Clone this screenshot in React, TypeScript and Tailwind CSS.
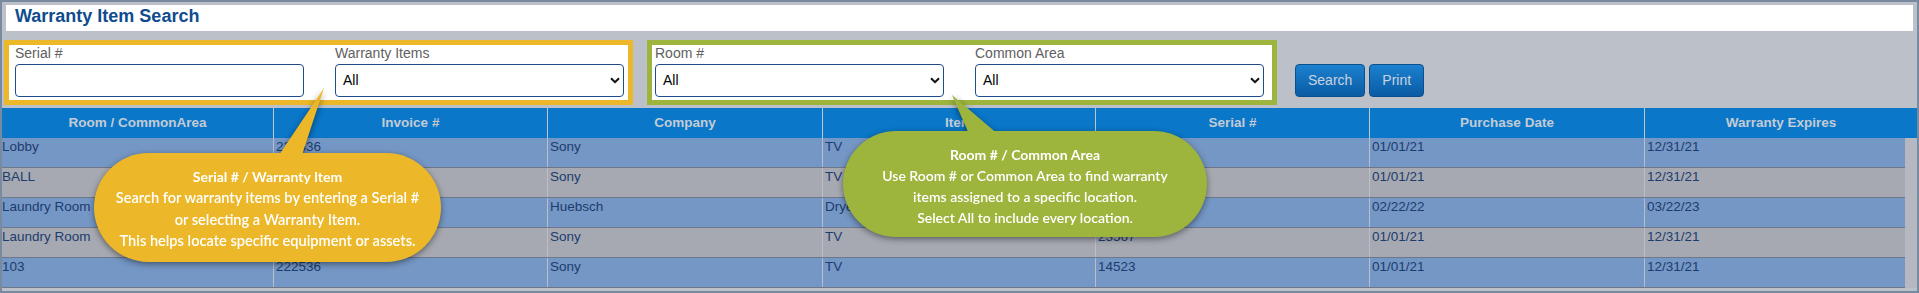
import type { ReactNode } from "react";

type WarrantyRow = {
  room: string;
  invoice: string;
  company: string;
  item: string;
  serial: string;
  purchased: string;
  expires: string;
};

const columns = [
  "Room / CommonArea",
  "Invoice #",
  "Company",
  "Item",
  "Serial #",
  "Purchase Date",
  "Warranty Expires",
];

const rows: WarrantyRow[] = [
  { room: "Lobby", invoice: "222536", company: "Sony", item: "TV", serial: "14523", purchased: "01/01/21", expires: "12/31/21" },
  { room: "BALL", invoice: "222536", company: "Sony", item: "TV", serial: "14523", purchased: "01/01/21", expires: "12/31/21" },
  { room: "Laundry Room", invoice: "34458", company: "Huebsch", item: "Dryer", serial: "HB22457", purchased: "02/22/22", expires: "03/22/23" },
  { room: "Laundry Room", invoice: "222536", company: "Sony", item: "TV", serial: "23567", purchased: "01/01/21", expires: "12/31/21" },
  { room: "103", invoice: "222536", company: "Sony", item: "TV", serial: "14523", purchased: "01/01/21", expires: "12/31/21" },
];

const gridCols = "grid grid-cols-[271px_274px_275px_273px_274px_275px_1fr]";

function Field({ label, children }: { label: string; children: ReactNode }) {
  return (
    <div className="flex w-[289px] flex-col">
      <span className="h-[16px] text-[14px] leading-[16px] text-[#606060]">{label}</span>
      <div className="mt-[3px] h-[33px]">{children}</div>
    </div>
  );
}

function Select() {
  return (
    <div className="relative h-[33px] w-[289px]">
      <select
        defaultValue="All"
        className="h-full w-full appearance-none rounded-[4px] border border-[#1f4d8c] bg-white pl-[7px] text-[14px] text-black outline-none"
      >
        <option>All</option>
      </select>
      <svg
        className="pointer-events-none absolute right-[4px] top-[13px]"
        width="10"
        height="7"
        viewBox="0 0 10 7"
      >
        <path d="M1 1.2 L5 5.2 L9 1.2" fill="none" stroke="#111" strokeWidth="2" />
      </svg>
    </div>
  );
}

function FormButton({ label }: { label: string }) {
  return (
    <button
      type="button"
      className="h-[33px] rounded-[4px] border border-[#0b4f8c] bg-gradient-to-b from-[#1c81cf] to-[#0a5ba4] px-[12px] text-[14px] text-[#c9d3e0]"
    >
      {label}
    </button>
  );
}

export default function App() {
  return (
    <div className="relative h-[293px] w-[1919px] overflow-hidden border-2 border-[#778aa0] bg-[#bcc0c8] font-['Liberation_Sans',Arial,sans-serif]">
      <div className="mx-[4px] mt-[3px] h-[26px] bg-white pl-[9px]">
        <h1 className="text-[18px] font-bold leading-[23px] text-[#0f4c8e]">
          Warranty Item Search
        </h1>
      </div>

      <div className="mt-[9px] flex h-[65px] items-start pl-[2px]">
        <div className="flex h-[65px] w-[629px] gap-[31px] border-[5px] border-[#ecb829] bg-white pl-[6px]">
          <Field label="Serial #">
            <input className="h-[33px] w-[289px] rounded-[4px] border border-[#1f4d8c] bg-white px-[7px] text-[14px] outline-none" />
          </Field>
          <Field label="Warranty Items">
            <Select />
          </Field>
        </div>

        <div className="ml-[14px] flex h-[65px] w-[630px] gap-[31px] border-[5px] border-[#9db43d] bg-white pl-[3px]">
          <Field label="Room #">
            <Select />
          </Field>
          <Field label="Common Area">
            <Select />
          </Field>
        </div>

        <div className="ml-[18px] mt-[24px] flex gap-[4px]">
          <FormButton label="Search" />
          <FormButton label="Print" />
        </div>
      </div>

      <div className="mt-[3px]">
        <div className={`${gridCols} h-[30px] bg-[#0a77c8]`}>
          {columns.map((col, i) => (
            <div
              key={col}
              className={`flex items-center justify-center text-[13.5px] font-bold text-[#c3cbd6] ${i > 0 ? "border-l border-[#bfc6d0]" : ""}`}
            >
              {col}
            </div>
          ))}
        </div>

        <div className="flex">
          <div className="w-[1903px]">
            {rows.map((row, r) => (
              <div
                key={r}
                className={`${gridCols} h-[30px] border-b border-[#6e7888] text-[13.5px] leading-[18px] text-[#1b3c6f] ${r % 2 === 0 ? "bg-[#7597c5]" : "bg-[#a6a9b1]"}`}
              >
                {[row.room, row.invoice, row.company, row.item, row.serial, row.purchased, row.expires].map(
                  (value, i) => (
                    <div
                      key={i}
                      className={i > 0 ? "border-l border-[#b9bec7] pl-[2px]" : ""}
                    >
                      {value}
                    </div>
                  )
                )}
              </div>
            ))}
          </div>
          <div className="w-[12px] bg-[#b5b8c0]" />
        </div>
      </div>

      {/* yellow callout */}
      <div className="pointer-events-none absolute left-[92px] top-[84px] h-[176px] w-[347px] drop-shadow-[0_2px_3px_rgba(0,0,0,0.45)]">
        <svg className="absolute left-0 top-0" width="347" height="90" viewBox="0 0 347 90">
          <polygon points="230,2 179,78 205,78" fill="#ecb829" />
        </svg>
        <div className="absolute left-0 top-[67px] flex h-[109px] w-[347px] flex-col items-center justify-center rounded-full bg-[#ecb829] pt-[2px] text-center font-['Lato',sans-serif] text-[14.6px] font-semibold leading-[21.5px] text-white">
          <p className="text-[14px] font-bold">Serial # / Warranty Item</p>
          <p>Search for warranty items by entering a Serial #</p>
          <p>or selecting a Warranty Item.</p>
          <p>This helps locate specific equipment or assets.</p>
        </div>
      </div>

      {/* green callout */}
      <div className="pointer-events-none absolute left-[841px] top-[91px] h-[144px] w-[364px] drop-shadow-[0_2px_3px_rgba(0,0,0,0.45)]">
        <svg className="absolute left-0 top-0" width="364" height="60" viewBox="0 0 364 60">
          <polygon points="109,2 129,48 163,48" fill="#9db43d" />
        </svg>
        <div className="absolute left-0 top-[38px] flex h-[106px] w-[364px] flex-col items-center justify-center rounded-full bg-[#9db43d] pt-[4px] text-center font-['Lato',sans-serif] text-[14px] font-semibold leading-[21px] text-white">
          <p className="font-bold">Room # / Common Area</p>
          <p>Use Room # or Common Area to find warranty</p>
          <p>items assigned to a specific location.</p>
          <p>Select All to include every location.</p>
        </div>
      </div>
    </div>
  );
}
